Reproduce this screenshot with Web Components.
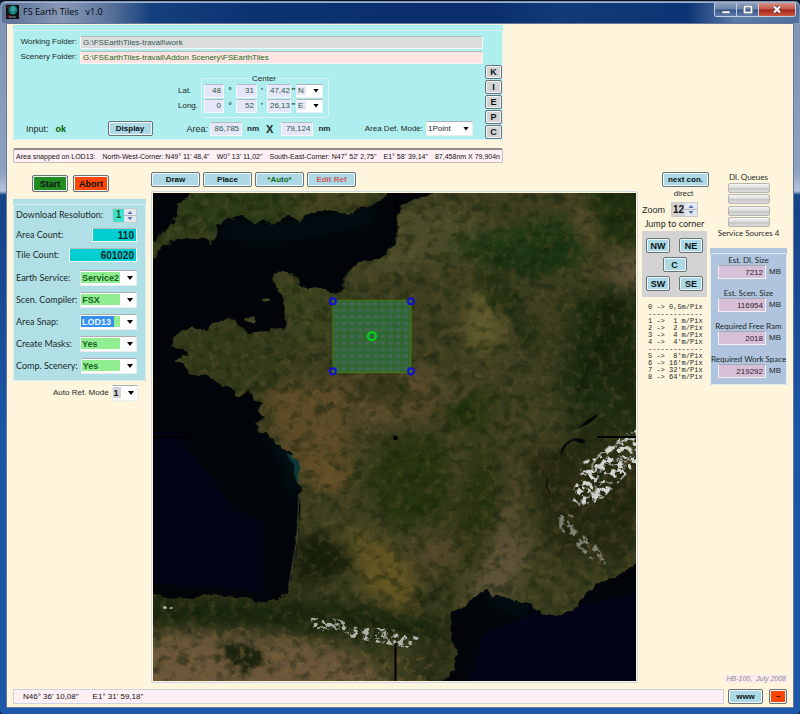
<!DOCTYPE html>
<html lang="en">
<head>
<meta charset="utf-8">
<title>FS Earth Tiles v1.0</title>
<style>
  html, body { margin: 0; }
  body {
    font: 8px/10px "Liberation Sans", Arial, sans-serif;
    color: #1c2a2a;
    background: #0d1a33;
  }
</style>
</head>
<body>
<fs-app></fs-app>

<script>
/* Shared base: renders template() into an open shadow root */
class FsElement extends HTMLElement {
  constructor() {
    super();
    this.attachShadow({ mode: 'open' });
  }

  connectedCallback() {
    this.shadowRoot.innerHTML = `
      <style>
        * { box-sizing: border-box; }
        input, select, button { font: inherit; color: inherit; margin: 0; border-radius: 0; }
      </style>
      ${this.template()}
    `;
  }

  attr(name, fallback = '') {
    const value = this.getAttribute(name);
    return (value === null ? fallback : value).replace(/"/g, '&quot;');
  }
}

/* Push button */
class FsButton extends FsElement {
  template() {
    return `
      <style>
        :host { display: block; height: 15px; }
        button {
          display: block; width: 100%; height: 100%; padding: 0;
          font-weight: bold; line-height: 10px; text-align: center; white-space: nowrap;
          color: var(--ink, #0a1414);
          background: var(--face, #add8e6);
          border: 1px solid #68737a; border-radius: 2px;
          box-shadow: inset 0 0 0 1px #eef6f8;
        }
      </style>
      <button type="button"><slot></slot></button>
    `;
  }
}
customElements.define('fs-button', FsButton);

/* Text box with an optional label in front */
class FsField extends FsElement {
  template() {
    return `
      <style>
        :host { display: block; }
        label { display: flex; align-items: center; justify-content: space-between; gap: 3px; height: 100%; }
        span { white-space: nowrap; text-align: var(--label-align, left); flex: 0 0 var(--label-width, auto); }
        span:empty { display: none; }
        input {
          width: var(--box-width, 100%); height: var(--box-height, 14px); min-width: 0;
          padding: 0 var(--box-pad, 2px); text-align: var(--align, right);
          font-family: "Liberation Sans", Arial, sans-serif;
          font-size: var(--box-font, 8px); font-weight: var(--box-weight, normal);
          color: var(--ink, #2b5a3b); background: var(--face, #e6e6fa);
          border: 1px solid #f4f8fa; border-top-color: #b4bcc0; outline: none;
        }
      </style>
      <label>
        <span>${this.attr('label')}</span>
        <input type="text" value="${this.attr('value')}" aria-label="${this.attr('name', this.attr('label'))}">
      </label>
    `;
  }
}
customElements.define('fs-field', FsField);

/* Drop-down with a highlighted text area and a white arrow area */
class FsSelect extends FsElement {
  template() {
    return `
      <style>
        :host { display: block; }
        label { display: flex; align-items: center; justify-content: space-between; gap: 3px; height: 100%; }
        .text { white-space: nowrap; }
        .text:empty { display: none; }
        .box { display: grid; width: var(--box-width, 57px); height: var(--box-height, 16px); background: #fff; border: 1px solid #e8eef0; border-top-color: #a8b0b4; }
        .box > * { grid-area: 1 / 1; }
        select {
          appearance: none; width: 100%; min-width: 0; height: 100%; padding: 0 14px 0 1px; border: 0; outline: none;
          font-family: "Liberation Sans", Arial, sans-serif;
          color: var(--ink, #16601c); font-weight: var(--box-weight, bold); font-size: var(--box-font, 9px);
          background: linear-gradient(var(--mark, transparent) 0 0) 0 1px / 33px calc(100% - 3px) no-repeat,
            linear-gradient(var(--face, #90ee90) 0 0) 0 1px / calc(100% - 16px) calc(100% - 3px) no-repeat;
        }
        i { justify-self: end; align-self: center; margin-right: 3px; width: 6px; height: 4px; background: #000; clip-path: polygon(0 0, 100% 0, 50% 100%); pointer-events: none; }
      </style>
      <label>
        <span class="text">${this.attr('label')}</span>
        <span class="box">
          <select aria-label="${this.attr('name', this.attr('label'))}"><option>${this.attr('value')}</option></select>
          <i></i>
        </span>
      </label>
    `;
  }
}
customElements.define('fs-select', FsSelect);

/* Number box with up and down arrows */
class FsSpinner extends FsElement {
  template() {
    return `
      <style>
        :host { display: block; }
        label { display: flex; align-items: center; justify-content: space-between; height: 100%; }
        .text { white-space: nowrap; font-size: var(--label-font, inherit); }
        .box { display: flex; width: var(--box-width, 25px); height: 15px; background: #fff; border: 1px solid #c4ccd0; }
        input {
          appearance: textfield; flex: 1; min-width: 0; padding: 0; border: 0; outline: none; text-align: center;
          font-family: "Liberation Sans", Arial, sans-serif;
          font-size: var(--box-font, 10px); font-weight: bold;
          color: var(--ink, #16601c); background: var(--face, #40e0d0);
        }
        input::-webkit-inner-spin-button { appearance: none; }
        svg { width: 12px; height: 13px; background: #e4e8f0; }
      </style>
      <label>
        <span class="text">${this.attr('label')}</span>
        <span class="box">
          <input type="number" value="${this.attr('value')}">
          <svg viewBox="0 0 12 13"><path d="M0 6.5h12" stroke="#b4bcc8"/><path d="M3.500 5 6 2l2.500 3zM3.500 8 6 11l2.500-3z" fill="#5a6ea8"/></svg>
        </span>
      </label>
    `;
  }
}
customElements.define('fs-spinner', FsSpinner);

/* Coloured panel with a strip above its group border */
class FsPanel extends FsElement {
  template() {
    return `
      <style>
        :host { display: block; padding-top: 5px; background: var(--panel); }
        .frame { height: 100%; border: 1px solid #dceff2; border-radius: 2px; padding: var(--inset, 0); }
      </style>
      <div class="frame"><slot></slot></div>
    `;
  }
}
customElements.define('fs-panel', FsPanel);

/* Window frame with title bar */
class FsWindow extends FsElement {
  template() {
    return `
      <style>
        :host {
          display: flex; flex-direction: column; box-sizing: border-box; min-height: 100vh;
          padding: 1px 1px 1px 2px; border-radius: 6px 6px 4px 4px;
          background: linear-gradient(#7f93b4 0, #8da0bf 170px, #b4c3da 190px, #164286 194px, #1b55a5 60%, #1c57a8 100%);
          border-top: 1px solid #0a0f1c;
        }
        header {
          display: flex; align-items: flex-start; height: 21px; padding: 0 3px 0 4px;
          background: linear-gradient(90deg, #5b7196 0, #8799b5 60px, #5d759c 105px, #153f7e 150px, #0c3272 250px, #0a2d6c 480px, #123a78 70%, #0c3373 86%, #5a7aa8 92%, #4f6f9f 100%);
          border-radius: 5px 5px 0 0; border-top: 1px solid #9fb4d2;
        }
        .logo { width: 13px; height: 14px; margin-top: 2px; }
        h1 { flex: 1; margin: 3px 0 0 4px; font: 9px/12px "Open Sans", "Noto Sans", sans-serif; color: #05080f; white-space: pre; }
        nav { display: flex; width: 82px; height: 14px; border: 1px solid #c3cedd; border-top: 0; border-radius: 0 0 3px 3px; overflow: hidden; }
        nav button { flex: 22; padding: 0; border: 0; border-right: 1px solid #c3cedd; background: linear-gradient(#8fa3c2, #6b83aa 48%, #35548a 52%, #5f7eae); }
        nav button:last-child { flex: 37; border: 0; background: linear-gradient(#d98f82, #c5574a 48%, #a32314 52%, #cc5a45); }
        nav svg { display: block; width: 12px; height: 11px; margin: auto; }
        main { flex: 1; display: flex; flex-direction: column; margin: 0 5px 5px 4px; border: 1px solid #64799c; background: #fff5dc; }
      </style>
      <header>
        <svg class="logo" viewBox="0 0 13 14">
          <rect width="13" height="14" fill="#11100f"/>
          <circle cx="7" cy="5" r="4.500" fill="#0c7774"/>
          <path d="M5 2l3-1 2 3-2 3-3-1zM6 8l2-1-1 3z" fill="#36a39a"/>
          <path d="M1 2h2M1 11h3" stroke="#b0272c"/><path d="M3 12h7" stroke="#8d9ba0"/>
        </svg>
        <h1>${this.attr('heading')}</h1>
        <nav>
          <button type="button" aria-label="Minimize"><svg viewBox="0 0 12 11"><path d="M2 7h8v2.500H2z" fill="#fff" stroke="#3a4658" stroke-width=".5"/></svg></button>
          <button type="button" aria-label="Maximize"><svg viewBox="0 0 12 11"><path d="M2.500 2.500h7v6h-7z" fill="none" stroke="#3a4658" stroke-width="3"/><path d="M2.500 2.500h7v6h-7z" fill="none" stroke="#f4f4f4" stroke-width="2"/></svg></button>
          <button type="button" aria-label="Close"><svg viewBox="0 0 12 11"><path d="M3 2.500l6 6M9 2.500l-6 6" stroke="#46302f" stroke-width="3.500"/><path d="M3 2.500l6 6M9 2.500l-6 6" stroke="#fff" stroke-width="2.200"/></svg></button>
        </nav>
      </header>
      <main><slot></slot></main>
    `;
  }
}
customElements.define('fs-window', FsWindow);

/* Satellite map with the selected area and the cross hair */
class FsMap extends FsElement {
  template() {
    const land = 'M280-20V0L262 6 249 12 245 22 243 50 237 57 225 65 205 70 193 80 190 91 192 96 183 101 170 96 147 94 143 84 135 79 120 79 122 90 130 104 132 124 134 137 120 135 110 139 94 141 84 129 74 125 60 129 54 137 40 134 27 140 19 144 20 153 34 158 36 162 21 168 32 171 36 180 54 182 67 190 80 198 88 204 97 197 101 206 109 209 106 216 110 224 104 230 106 239 115 240 122 250 134 257 141 263 147 272 144 283 148 296 146 320 144 347 140 374 135 397 130 404 110 409 94 404 79 405 60 400 50 401 40 404 17 404 0 399H-20V507H285L289 487 300 477 304 457 299 447 296 430 299 419 314 409 332 396 338 402 350 404 360 407 377 410 384 417 390 419 405 422 424 414 434 397 450 387 470 380 483 369H503V-20Z';
    const england = 'M38-20V0L32 7 26 10 25 22 19 32 9 40 0 49H-20V64H4L7 55 20 47 34 44 47 45 59 50 65 39 64 32 75 25 89 23 95 24 102 32 110 27 120 30 128 26 137 22 147 30 153 23 160 20 177 17 197 21 207 15 222 10 234 0V-20Z';
    return `
      <style>
        :host { display: block; overflow: hidden; position: relative; background: #010409; }
        svg { position: absolute; inset: 0; width: 100%; height: 100%; display: block; }
        filter { color-interpolation-filters: sRGB; }
      </style>
      <svg viewBox="0 0 483 487" preserveAspectRatio="xMidYMid slice" role="img" aria-label="Map of France">
        <defs>
          <filter id="coast" filterUnits="userSpaceOnUse" x="-20" y="-20" width="523" height="527">
            <feTurbulence type="fractalNoise" baseFrequency=".12" numOctaves="3" seed="4"/>
            <feDisplacementMap in="SourceGraphic" scale="7" xChannelSelector="R" yChannelSelector="G"/>
          </filter>
          <filter id="soft" x="-30%" y="-30%" width="160%" height="160%"><feGaussianBlur stdDeviation="8"/></filter>
          <filter id="rough" x="-20%" y="-20%" width="140%" height="140%">
            <feTurbulence type="fractalNoise" baseFrequency=".06" numOctaves="4" seed="9" result="n"/>
            <feGaussianBlur in="SourceGraphic" stdDeviation="4"/>
            <feDisplacementMap in2="n" scale="34" xChannelSelector="R" yChannelSelector="G"/>
          </filter>
          <filter id="dark" x="0" y="0" width="100%" height="100%">
            <feTurbulence type="fractalNoise" baseFrequency=".08 .1" numOctaves="6" seed="21"/>
            <feColorMatrix values="0 0 0 0 .07  0 0 0 0 .13  0 0 0 0 .04  4 0 0 0 -1.900"/>
            <feComposite in2="SourceGraphic" operator="in"/>
          </filter>
          <filter id="light" x="0" y="0" width="100%" height="100%">
            <feTurbulence type="fractalNoise" baseFrequency=".14 .12" numOctaves="5" seed="33"/>
            <feColorMatrix values="0 0 0 0 .46  0 0 0 0 .38  0 0 0 0 .22  0 4 0 0 -2"/>
            <feComposite in2="SourceGraphic" operator="in"/>
          </filter>
          <filter id="snow" x="-10%" y="-10%" width="120%" height="120%">
            <feTurbulence type="fractalNoise" baseFrequency=".17" numOctaves="4" seed="7"/>
            <feColorMatrix values="0 0 0 0 .82  0 0 0 0 .83  0 0 0 0 .82  9 0 0 0 -4.500"/>
            <feComposite in2="SourceGraphic" operator="in"/>
          </filter>
          <clipPath id="ground"><path d="${land}"/><path d="${england}"/></clipPath>
          <pattern id="cells" x="180" y="107" width="7.700" height="6.500" patternUnits="userSpaceOnUse">
            <path d="M1.500 2h4.500v3h-4.500z" fill="#4f6663" opacity=".8"/>
          </pattern>
        </defs>

        <rect width="483" height="487" fill="#010509"/>
        <path d="M0 238h22l20 25 20 24 17 28 32 12v73L80 395 0 390z" fill="#02031a" opacity=".75"/>
        <path d="M330 440l50-20 103-20v87H316z" fill="#02031a" opacity=".85"/>
        <g fill="none" stroke="#0a3f42" filter="url(#soft)" opacity=".4">
          <path d="M70 38 130 40 220 22" stroke-width="8"/><path d="M120 246 143 268 140 296" stroke-width="9"/><path d="M335 402 375 416" stroke-width="8"/>
        </g>
        <path d="M134 260l9 3 6 8-2 8 3 14-6-4-3-10 1-7-6-7z" fill="#0e4542" opacity=".8"/>

        <g filter="url(#coast)">
          <g clip-path="url(#ground)">
            <rect x="-20" y="-20" width="523" height="527" fill="#3d3f20"/>
            <g filter="url(#soft)">
              <path d="M-20-20H240V0L190 25 100 35-20 60z" fill="#2d3b18"/>
              <path d="M140-10h90v10l-30 20-60 5z" fill="#434420"/>
              <path d="M10 130 130 130 140 170 110 200 30 180z" fill="#343b1b"/>
              <path d="M125 80 190 105 175 150 140 150z" fill="#3a431e"/>
              <path d="M250 10 330 20 340 60 260 80 200 80z" fill="#4b4b29"/>
              <path d="M110 195 190 185 200 250 190 300 150 290 120 240z" fill="#5d4c27"/>
              <path d="M180 182 280 175 290 220 210 235z" fill="#5c4d2c"/>
              <path d="M320 90 350 110 350 150 320 165 310 130z" fill="#615c2e"/>
              <path d="M290 50 420 20 430 70 380 82 330 70z" fill="#213a15"/>
              <path d="M430-20h73v80l-73-20z" fill="#20300f"/>
              <path d="M410 5 440 15 450 55 425 50z" fill="#544c2c"/>
              <path d="M455 60h48v40l-35 30z" fill="#5e5338"/>
              <path d="M420 100 503 95V240l-80 10-20-60z" fill="#212e12"/>
              <path d="M300 195 340 200 330 240 290 230z" fill="#25340f"/>
              <path d="M235 245 290 245 295 320 240 335 215 290z" fill="#27340f"/>
              <path d="M330 245 345 300 320 375 300 370 310 300z" fill="#27320f"/>
              <path d="M148 335 170 345 200 370 160 395 140 395z" fill="#1f260e"/>
              <path d="M190 330 245 355 270 400 255 420 215 400z" fill="#645623"/>
              <path d="M255 345 320 345 300 375 265 380z" fill="#524829"/>
              <path d="M370 260 450 240 503 300 470 370 400 360z" fill="#282b12"/>
              <path d="M350 330 380 350 360 400 310 400z" fill="#5f543a"/>
              <path d="M-20 400 150 405 300 425 295 450 150 440-20 430z" fill="#1b270e"/>
              <path d="M-20 440H120L200 460 260 507H-20z" fill="#6c573c"/>
              <path d="M275 435 300 440 290 507 260 480z" fill="#2b2f17"/>
            </g>
            <g filter="url(#rough)">
              <path d="M70 450 110 450 115 475 70 480z" fill="#1d240f"/>
              <path d="M330 65 400 55 425 35 420 60 380 85 345 75z" fill="#163010" opacity=".8"/>
              <path d="M315 75 350 85 370 115 385 150 375 160 360 130z" fill="#1e2c0f" opacity=".75"/>
              <path d="M445 115 475 100 465 140 440 190 425 195z" fill="#131e0a" opacity=".8"/>
              <path d="M458 130 483 150V215l-30-30z" fill="#1a260e" opacity=".8"/>
              <path d="M265 170 300 195 330 180 360 160 300 215z" fill="#65533a" opacity=".5"/>
              <path d="M190 190 230 175 280 205 260 215 200 205z" fill="#1f2911" opacity=".55"/>
              <path d="M250 400 295 390 300 400 270 410z" fill="#1a240c" opacity=".9"/>
              <path d="M148 340 175 345 195 365 175 378 145 385z" fill="#171e0b" opacity=".8"/>
              <path d="M160 255 175 270 200 275 170 310z" fill="#6b5428" opacity=".55"/>
              <path d="M358 270 372 265 362 335 345 350z" fill="#625238" opacity=".6"/>
            </g>
            <rect x="-20" y="-20" width="523" height="527" filter="url(#dark)" opacity=".45"/>
            <rect x="-20" y="-20" width="523" height="527" filter="url(#light)" opacity=".28"/>
            <path d="M-20 435H140L220 460 280 465 270 507H-20z" filter="url(#light)" opacity=".5"/>
          </g>
          <path d="M92 125l9-2 3 4-7 2zM108 104l8-1 2 4-7 2z" fill="#3d4525"/>
        </g>

        <path d="M146 300 144 345 136 392" fill="none" stroke="#6d6d51" stroke-width=".6"/>
        <path d="M407 261q2-13 14-16 8-1 11 3l-4 2-8-3q-8 3-12 14zM424 235l9-8 14-8-11 11z" fill="#020507"/>
        <path d="M394 285l-1 8 3 6" fill="none" stroke="#020507"/>
        <g filter="url(#snow)">
          <path d="M483 236 465 244 445 262 430 268 425 285 416 305 428 312 446 308 464 290 483 270z"/>
          <path d="M405 318 420 322 420 335 442 350 455 372 435 364 406 335z" opacity=".5"/>
          <path d="M158 424 185 425 205 434 235 434 270 445 255 454 220 448 190 442 160 434z" opacity=".8"/>
        </g>
        <g stroke="#cfcfcc" stroke-width="1.500" fill="none" opacity=".7" filter="url(#coast)">
          <path d="M483 244 468 248 458 256 444 262 438 276 428 282M478 264 462 272 450 270 446 278M466 262 470 275M458 295 442 298 432 305 426 312M442 291 440 308M436 298 448 302"/>
        </g>
        <path d="M11 412l3 1v2h-3zM17 414l3-1v2h-3z" fill="#c5c5c0"/>

        <path d="M180 107h78v72h-78z" fill="#2d6b34" fill-opacity=".9" stroke="#497a10"/>
        <path d="M181 108h76v70h-76z" fill="url(#cells)"/>
        <g fill="none" stroke="#1010d8" stroke-width="2">
          <circle cx="180" cy="108" r="3"/><circle cx="258" cy="108" r="3"/><circle cx="180" cy="178" r="3"/><circle cx="258" cy="178" r="3"/>
        </g>
        <circle cx="219" cy="143" r="4" fill="none" stroke="#00de14" stroke-width="2"/>
        <path d="M242.500 0V40M242.500 449V487M0 243.500H39M444 243.500H483" stroke="#000" stroke-width="2"/>
        <circle cx="242.500" cy="244.500" r="2.500"/>
      </svg>
    `;
  }
}
customElements.define('fs-map', FsMap);

/* Folders, centre, area size */
class FsInputPanel extends FsElement {
  template() {
    return `
      <style>
        :host { display: block; }
        fs-panel { --panel: #afeeee; }
        .inner { display: flex; height: 108px; }
        .main { flex: 1; display: flex; flex-direction: column; padding: 4px 0 0 2px; }
        .folder { height: 14px; --label-width: 61px; --label-align: right; --align: left; --box-height: 13px; }
        .gray { --face: #dcdcdc; --ink: #35595a; }
        .rose { --face: #ffe4e1; --ink: #1c6a1c; margin-top: 1px; }
        fieldset { align-self: flex-start; margin: 10px 0 0 185px; padding: 0 4px 3px 2px; border: 1px solid #dcf4f4; border-radius: 3px; width: 128px; height: 44px; }
        legend { margin: auto; padding: 0 2px; height: 9px; line-height: 9px; }
        .coord { display: grid; grid-template-columns: 26px 20px 12px 21px 10px 24px 5px 27px; align-items: center; height: 15px; margin-left: -26px; --box-width: 100%; --box-weight: normal; --box-font: 8px; --box-height: 14px; }
        .coord fs-select { --face: #e6e6fa; --ink: #2b5a3b; }
        .sec { --box-pad: 0; }
        b { text-align: center; }
        .bottom { display: flex; align-items: center; height: 15px; margin-top: 3px; padding: 0 10px 0 10px; }
        .bottom fs-field { width: 32px; }
        .ok { width: 52px; margin-left: 7px; text-align: left; color: #006400; font-size: 9px; }
        .bottom .lbl { font-size: 9px; }
        .display { width: 45px; }
        .ar { margin: 0 2px 0 34px; }
        .nm { margin-left: 5px; }
        .x { margin: 0 8px 0 7px; font-size: 11px; }
        .mode { margin-left: auto; --box-width: 47px; --box-height: 15px; --box-weight: normal; --box-font: 8px; --face: #fff; --ink: #1c2a2a; }
        .side { display: flex; flex-direction: column; justify-content: flex-end; gap: 1px; width: 17px; margin-left: 2px; --face: #d3d3d3; font-size: 9px; }
        .side fs-button { height: 14px; }
      </style>
      <fs-panel>
        <div class="inner">
          <div class="main">
            <fs-field class="folder gray" label="Working Folder:" value="G:\\FSEarthTiles-travail\\work"></fs-field>
            <fs-field class="folder rose" label="Scenery Folder:" value="G:\\FSEarthTiles-travail\\Addon Scenery\\FSEarthTiles"></fs-field>
            <fieldset>
              <legend>Center</legend>
              <div class="coord">
                <span>Lat.</span><fs-field name="Latitude degrees" value="48"></fs-field><b>°</b>
                <fs-field name="Latitude minutes" value="31"></fs-field><b>'</b>
                <fs-field class="sec" name="Latitude seconds" value="47,42"></fs-field><b>"</b>
                <fs-select name="North or south" value="N"></fs-select>
              </div>
              <div class="coord">
                <span>Long.</span><fs-field name="Longitude degrees" value="0"></fs-field><b>°</b>
                <fs-field name="Longitude minutes" value="52"></fs-field><b>'</b>
                <fs-field class="sec" name="Longitude seconds" value="26,13"></fs-field><b>"</b>
                <fs-select name="East or west" value="E"></fs-select>
              </div>
            </fieldset>
            <div class="bottom">
              <span class="lbl">Input:</span><b class="ok">ok</b>
              <fs-button class="display">Display</fs-button>
              <span class="lbl ar">Area:</span><fs-field name="Area width" value="86,785"></fs-field>
              <b class="nm">nm</b><b class="x">X</b>
              <fs-field name="Area height" value="79,124"></fs-field><b class="nm">nm</b>
              <fs-select class="mode" label="Area Def. Mode:" value="1Point"></fs-select>
            </div>
          </div>
          <div class="side">
            <fs-button>K</fs-button><fs-button>I</fs-button><fs-button>E</fs-button><fs-button>P</fs-button><fs-button>C</fs-button>
          </div>
        </div>
      </fs-panel>
    `;
  }
}
customElements.define('fs-input-panel', FsInputPanel);

/* Start / Abort and the build settings */
class FsSettings extends FsElement {
  template() {
    return `
      <style>
        :host { display: block; min-width: 0; }
        .run { display: flex; gap: 5px; margin: 3px 0 7px 19px; font-size: 9px; }
        .run fs-button { width: 36px; height: 17px; }
        .start { --face: #228b22; }
        .abort { --face: #ff4500; }
        fs-panel { --panel: #b0e0e6; --inset: 0 8px 3px 2px; }
        .rows { font: 9px/12px Lato, "Liberation Sans", sans-serif; }
        .rows fs-field, .rows fs-spinner { height: 20px; }
        .rows fs-select { height: 22px; }
        .count { --face: #00ced1; --ink: #042828; --box-font: 10px; --box-weight: bold; }
        .area { --box-width: 45px; }
        .tile { --box-width: 68px; margin-bottom: 2px; }
        .snap { --mark: #3390f0; --ink: #eef6ff; }
        .auto { margin: 4px 8px 0 40px; height: 16px; --box-width: 27px; --face: #d3d3d3; --ink: #111; }
      </style>
      <div class="run"><fs-button class="start">Start</fs-button><fs-button class="abort">Abort</fs-button></div>
      <fs-panel>
        <div class="rows">
          <fs-spinner label="Download Resolution:" value="1"></fs-spinner>
          <fs-field class="count area" label="Area Count:" value="110"></fs-field>
          <fs-field class="count tile" label="Tile Count:" value="601020"></fs-field>
          <fs-select label="Earth Service:" value="Service2"></fs-select>
          <fs-select label="Scen. Compiler:" value="FSX"></fs-select>
          <fs-select class="snap" label="Area Snap:" value="LOD13"></fs-select>
          <fs-select label="Create Masks:" value="Yes"></fs-select>
          <fs-select label="Comp. Scenery:" value="Yes"></fs-select>
        </div>
      </fs-panel>
      <fs-select class="auto" label="Auto Ref. Mode" value="1"></fs-select>
    `;
  }
}
customElements.define('fs-settings', FsSettings);

/* Zoom, corner jumps and the zoom legend */
class FsNavigator extends FsElement {
  template() {
    return `
      <style>
        :host { display: block; min-width: 0; }
        .next { width: 47px; margin-left: 20px; }
        p { margin: 0; text-align: center; white-space: nowrap; }
        .direct { margin: 2px 0 3px 18px; }
        fs-spinner { width: 56px; --label-font: 9px; --box-width: 27px; --face: #d3d3d3; --ink: #111; }
        .jump { margin: 2px 0; font: 9px/10px Lato, "Liberation Sans", sans-serif; }
        .corners { display: grid; grid-template-columns: 24px 24px; justify-content: space-between; gap: 4px 0; padding: 7px 4px 6px; background: #d3d3d3; font-size: 9px; }
        .corners .c { grid-column: 1 / 3; justify-self: center; width: 24px; }
        .corners fs-button { height: 15px; }
        pre { margin: 7px 0 0 6px; font: 7px/7px "Liberation Mono", monospace; }
      </style>
      <fs-button class="next">next con.</fs-button>
      <p class="direct">direct</p>
      <fs-spinner label="Zoom" value="12"></fs-spinner>
      <p class="jump">Jump to corner</p>
      <div class="corners">
        <fs-button>NW</fs-button><fs-button>NE</fs-button>
        <fs-button class="c">C</fs-button>
        <fs-button>SW</fs-button><fs-button>SE</fs-button>
      </div>
      <pre>0 -> 0,5m/Pix
-------------
1 ->  1 m/Pix
2 ->  2 m/Pix
3 ->  4 m/Pix
4 ->  4'm/Pix
-------------
5 ->  8'm/Pix
6 -> 16'm/Pix
7 -> 32'm/Pix
8 -> 64'm/Pix</pre>
    `;
  }
}
customElements.define('fs-navigator', FsNavigator);

/* Download queues and size estimates */
class FsEstimates extends FsElement {
  template() {
    const rows = [
      ['Est. Dl. Size', '7212'],
      ['Est. Scen. Size', '116954'],
      ['Required Free Ram', '2018'],
      ['Required Work Space', '219292']
    ];
    return `
      <style>
        :host { display: flex; flex-direction: column; min-width: 0; }
        p { margin: 0; text-align: center; white-space: nowrap; font-family: Lato, "Liberation Sans", sans-serif; }
        .queues { display: grid; gap: 1px; width: 42px; margin: 1px auto; }
        .bar { height: 10px; border: 1px solid #b4b4b0; border-radius: 2px; background: linear-gradient(#f6f6f6, #dcdcdc 45%, #c6c6c6 55%, #dedede); }
        .bar:nth-child(3) { margin-top: 1px; }
        fs-panel { --panel: #b0c4de; --inset: 0; margin-top: 10px; }
        label { display: block; height: 33px; padding-top: 1px; }
        label:last-child { height: 31px; }
        .name { display: block; height: 10px; text-align: center; white-space: nowrap; font-family: Lato, "Liberation Sans", sans-serif; }
        .row { display: flex; align-items: center; gap: 3px; margin-left: 7px; }
        input { width: 48px; height: 14px; padding: 0 2px; text-align: right; font-size: 8px; color: #30202c; background: #d8bfd8; border: 1px solid #f2f2f6; border-top-color: #a8a8b4; }
      </style>
      <p>Dl. Queues</p>
      <div class="queues">
        ${'<div class="bar" role="progressbar"></div>'.repeat(4)}
      </div>
      <p>Service Sources 4</p>
      <fs-panel>
        ${rows.map(([name, value]) => `
          <label>
            <span class="name">${name}</span>
            <span class="row"><input type="text" value="${value}">MB</span>
          </label>
        `).join('')}
      </fs-panel>
    `;
  }
}
customElements.define('fs-estimates', FsEstimates);

/* The whole application */
class FsApp extends FsElement {
  template() {
    return `
      <style>
        :host { display: block; }
        .content { flex: 1; display: flex; flex-direction: column; padding: 1px 6px 3px; }
        .top { width: 490px; max-width: 100%; }
        .snapped {
          display: flex; justify-content: space-between; height: 15px; margin: 8px 0 9px; padding: 0 2px; white-space: nowrap;
          font-size: 7px; line-height: 13px;
          background: #fff0f5; border: 1px solid #c0bcc0; border-top: 2px solid #8f8f90; border-radius: 2px; color: #111;
        }
        .work { flex: 1; display: flex; }
        fs-settings { flex: 0 0 133px; margin-right: 5px; }
        .center { flex: 1; display: flex; flex-direction: column; min-width: 0; }
        .tools { display: flex; gap: 3px; margin-bottom: 4px; }
        .tools fs-button { width: 49px; }
        .auto { --ink: #0b6b1b; }
        .edit { --ink: #cd5c5c; }
        .frame { flex: 1; display: flex; border: 1px solid #ccd8e4; border-radius: 2px; padding: 1px; }
        fs-map { flex: 1; }
        .right { display: flex; flex-direction: column; width: 145px; margin-left: 4px; }
        .tops { display: flex; gap: 3px; }
        fs-navigator { flex: 0 0 65px; }
        fs-estimates { flex: 1; }
        .credit { margin: auto 0 0 auto; padding: 0 1px; font-size: 7px; line-height: 8px; font-style: italic; color: #8c8c8c; background: #fbeaf0; white-space: pre; }
        footer { display: flex; margin-top: 6px; }
        .where {
          flex: 1; display: flex; gap: 14px; height: 15px; padding-left: 9px; margin-right: 4px;
          line-height: 13px; color: #111;
          background: #fff0f5; border: 1px solid #cdd3df;
        }
        .www { width: 35px; margin-right: 6px; }
        .tilde { width: 18px; --face: #ff4500; }
      </style>
      <fs-window heading="FS Earth Tiles   v1.0">
        <div class="content">
          <div class="top">
            <fs-input-panel></fs-input-panel>
            <div class="snapped">
              <span>Area snapped on LOD13:</span>
              <span>North-West-Corner: N49° 11' 48,4"</span>
              <span>W0° 13' 11,02"</span>
              <span>South-East-Corner: N47° 52' 2,75"</span>
              <span>E1° 58' 39,14"</span>
              <span>87,458nm X 79,904n</span>
            </div>
          </div>
          <div class="work">
            <fs-settings></fs-settings>
            <div class="center">
              <div class="tools">
                <fs-button>Draw</fs-button><fs-button>Place</fs-button>
                <fs-button class="auto">*Auto*</fs-button><fs-button class="edit">Edit Ref</fs-button>
              </div>
              <div class="frame"><fs-map></fs-map></div>
            </div>
            <div class="right">
              <div class="tops"><fs-navigator></fs-navigator><fs-estimates></fs-estimates></div>
              <div class="credit">HB-100,  July 2008</div>
            </div>
          </div>
          <footer>
            <div class="where"><span>N46° 36' 10,08"</span><span>E1° 31' 59,18"</span></div>
            <fs-button class="www">www</fs-button>
            <fs-button class="tilde">~</fs-button>
          </footer>
        </div>
      </fs-window>
    `;
  }
}
customElements.define('fs-app', FsApp);
</script>
</body>
</html>
